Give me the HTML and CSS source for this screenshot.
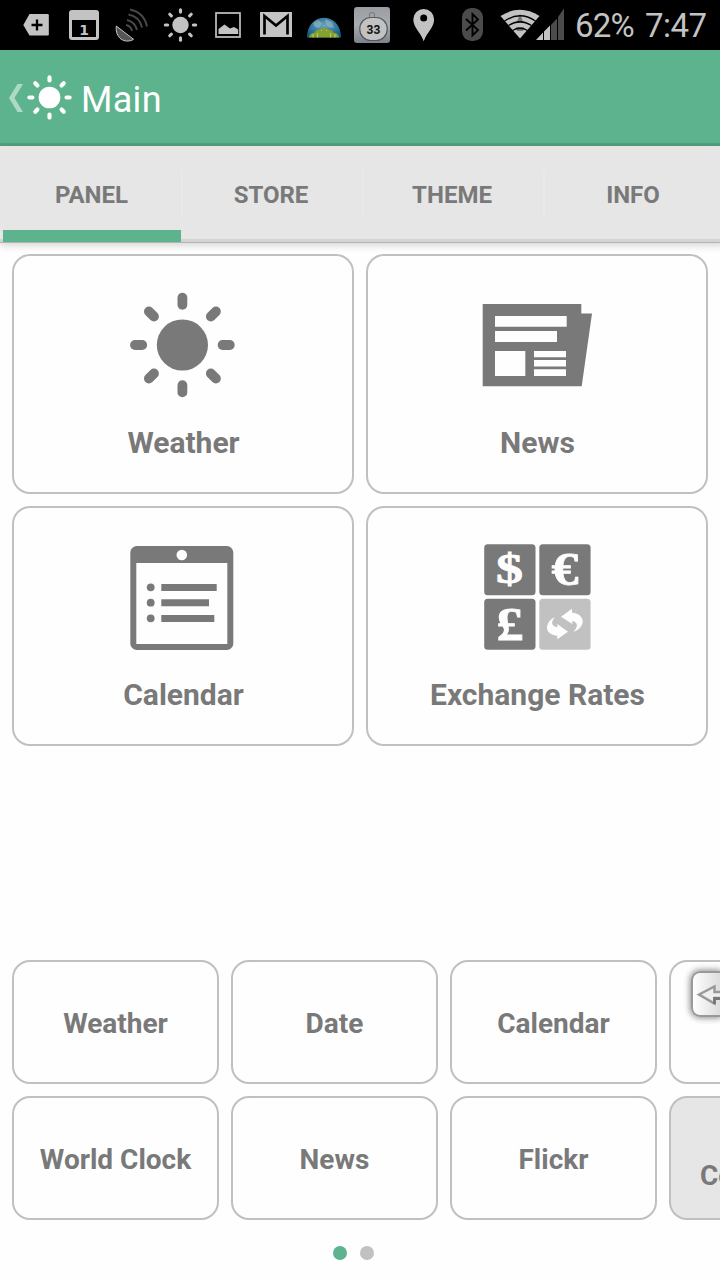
FILE: index.html
```html
<!DOCTYPE html>
<html lang="en">
<head>
    <meta charset="UTF-8">
    <meta name="viewport" content="width=device-width, initial-scale=1.0">
    <title>Main</title>
    <link rel="stylesheet" href="styles.css">
</head>
<body>
    <svg class="defs" width="0" height="0">
        <symbol id="sun" viewBox="-53 -53 106 106">
            <circle r="25.6"/>
            <g id="rays">
                <rect id="ray" x="-4.9" y="-52.3" width="9.8" height="17" rx="4.9"/>
                <use href="#ray" transform="rotate(45)"/>
                <use href="#ray" transform="rotate(90)"/>
                <use href="#ray" transform="rotate(135)"/>
                <use href="#ray" transform="rotate(180)"/>
                <use href="#ray" transform="rotate(225)"/>
                <use href="#ray" transform="rotate(270)"/>
                <use href="#ray" transform="rotate(315)"/>
            </g>
        </symbol>
        <linearGradient id="silver" x1="0" y1="0" x2="0" y2="1">
            <stop offset="0" stop-color="#9a9da1"/>
            <stop offset="0.5" stop-color="#a9acaf"/>
            <stop offset="1" stop-color="#7d838b"/>
        </linearGradient>
        <radialGradient id="globe" cx="0.5" cy="0.4" r="0.6">
            <stop offset="0" stop-color="#6fa3b8"/>
            <stop offset="1" stop-color="#12608f"/>
        </radialGradient>
    </svg>

    <div class="status">
        <svg width="48" height="50"><path fill="#c3c3c3" d="M17.500 14h18q1.300 0 1.300 1.300v18.900q0 1.300-1.300 1.300h-18L11.300 25z"/><path stroke="#000" stroke-width="2.300" d="M25 19.500v11M19.500 25h11"/></svg>
        <svg width="48" height="50"><rect x="9" y="10" width="30" height="30" rx="3" fill="#c3c3c3"/><path d="M12 20h24v17H12z"/><text class="day" x="24" y="34.500">1</text></svg>
        <svg width="48" height="50">
            <path fill="#555" stroke="#c3c3c3" d="M8.300 26L25.500 39.300C22 42 14 42 10.500 36.500 8 32.500 8 29 8.300 26z"/>
            <g fill="none" stroke="#484848" stroke-width="2"><path d="M18 25q5 1 6 6M19 20q8 2 10 10M20.500 14.500q11 2 13.500 13M22 9.500q14 3 17 17"/></g>
        </svg>
        <svg width="48" height="50" fill="#c3c3c3"><use href="#sun" x="7.500" y="8" width="34" height="34"/></svg>
        <svg width="48" height="50"><rect x="12" y="13" width="24" height="24" fill="none" stroke="#c3c3c3" stroke-width="1.700"/><path fill="#c3c3c3" d="M14.500 34v-5l6-4.500 5.500 4 4-1.500 4.200 2.500V34z"/></svg>
        <svg width="48" height="50"><path fill="#c3c3c3" d="M8 12h32v25H8z"/><path fill="none" stroke="#000" stroke-width="2.700" d="M12.500 34.500V16L24 25.500 35.500 16v18.500"/></svg>
        <svg width="48" height="50">
            <path fill="url(#globe)" d="M7 37.500C7 11 41 11 41 37.500z"/>
            <path fill="#a4c4c8" opacity=".5" d="M13 23l5-3 4 3-3 5-4-1zM25 19l7 3 2 6-6-1-2-3z"/>
            <path fill="#86a02c" d="M9 37.500q1-5 5-4.500 2-3.500 4.500-3 5.500-4 11 0 3-.5 4.500 3 4-.5 5 4.500z"/>
            <path stroke="#b7cd68" d="M13 34v3.500M17.500 33v4.500M30.500 33v4.500M35 34v3.500M21 30.500h1M26 30.500h1"/>
        </svg>
        <svg width="48" height="50">
            <rect x="6" y="7" width="36" height="36" rx="3" fill="url(#silver)"/>
            <rect x="21.500" y="12.500" width="5" height="6" rx="2" fill="none" stroke="#70767e"/>
            <rect x="11.800" y="17.500" width="27.400" height="23" rx="11" fill="#c2c2c2" stroke="#54585d" stroke-width="1.200"/>
            <text class="count" x="25.500" y="34">33</text>
        </svg>
        <svg width="48" height="50"><path fill="#c3c3c3" fill-rule="evenodd" d="M27.700 41.300C24.500 32 17.300 28 17.300 19.300a10.400 10.400 0 0 1 20.800 0C38.100 28 31 32 27.700 41.300zM27.700 14.500a3.500 3.500 0 1 0 0 7 3.500 3.500 0 1 0 0-7z"/></svg>
        <svg width="48" height="50"><rect x="18" y="8" width="21" height="33" rx="9.500" fill="#4b4b4b"/><path fill="none" stroke="#000" stroke-width="1.900" d="M22 19l12 11-5.500 5.500V14l5.500 5.500-12 11"/></svg>
        <svg class="wifi" width="40" height="50">
            <path fill="#c3c3c3" d="M20 38.500L.5 16Q20 3.500 39.500 16z"/>
            <path fill="#757575" d="M20 14l3.500 9h-7zM16 27h8l-1 4h-6z"/>
            <path fill="none" stroke="#000" stroke-width="1.300" d="M4.500 21Q20 10.500 35.500 21M8.500 25.500Q20 18 31.500 25.500M12.500 30.500Q20 26 27.500 30.500"/>
        </svg>
        <svg class="signal" width="28" height="50"><path fill="#4b4b4b" d="M15 25l6-6.500V40h-6zM22 17l6-8.500V40h-6z"/><path fill="#c3c3c3" d="M0 40l7-7.500V40zM8 31.500l6-6V40H8z"/></svg>
        <span class="battery">62%</span>
        <span class="clock">7:47</span>
    </div>

    <div class="header">
        <svg class="back" width="14" height="28"><path d="M8.500 0H14L5.500 14 14 28H8.500L0 14z"/></svg>
        <svg class="logo" width="45" height="45"><use href="#sun" width="45" height="45"/></svg>
        <h1>Main</h1>
    </div>

    <div class="tabs">
        <div class="tab active"><span>PANEL</span></div>
        <div class="tab"><span>STORE</span></div>
        <div class="tab"><span>THEME</span></div>
        <div class="tab"><span>INFO</span></div>
    </div>

    <div class="panels">
        <div class="card">
            <svg width="110" height="110"><use href="#sun" x="1.400" y="2" width="106" height="106"/></svg>
            <span>Weather</span>
        </div>
        <div class="card">
            <svg width="110" height="110">
                <path d="M.7 14h98.600v9.500H110L99.700 96.300H.7z"/>
                <path fill="#fefefe" d="M13 26h71.700v10.700H13zM13 41h62v11H13zM13 61h30.300v25H13zM52 61h32v6.300H52zM52 70h32v6.500H52zM52 79.300h32V86H52z"/>
            </svg>
            <span>News</span>
        </div>
        <div class="card">
            <svg width="110" height="110">
                <rect x="2.300" y="4" width="103" height="104" rx="6.500"/>
                <path fill="#fefefe" d="M8.300 21h91v81h-91z"/>
                <circle cx="53.800" cy="13" r="5.300" fill="#fefefe"/>
                <circle cx="22.700" cy="45.300" r="3.900"/>
                <circle cx="22.700" cy="60.700" r="3.900"/>
                <circle cx="22.700" cy="76.300" r="3.900"/>
                <path d="M33.300 42h55.400v7H33.300zM33.300 57.300H81v7H33.300zM33.300 73h53v7h-53z"/>
            </svg>
            <span>Calendar</span>
        </div>
        <div class="card">
            <svg width="110" height="110">
                <rect x="2.200" y="2.200" width="51.300" height="51" rx="3.500"/>
                <rect x="57.300" y="2.200" width="51.300" height="51" rx="3.500"/>
                <rect x="2.200" y="56.800" width="51.300" height="51" rx="3.500"/>
                <rect x="57.300" y="56.800" width="51.300" height="51" rx="3.500" fill="#c1c1c1"/>
                <text class="money dollar" x="27.500" y="40.500" textLength="27" lengthAdjust="spacingAndGlyphs">$</text>
                <text class="money" x="83" y="43" textLength="27" lengthAdjust="spacingAndGlyphs">€</text>
                <text class="money" x="28" y="98" textLength="27" lengthAdjust="spacingAndGlyphs">£</text>
                <path fill="#fefefe" d="M79 74.700L90 66.700v4C97 71 101 75.500 100.700 79.700 100 85 96 88.500 91.300 89.700 96.500 85 96 80 90.300 79v3zM86 89.700l-10.700 7.600v-3.600C69 93.500 64.500 89.500 65 85.300 65.500 80.500 68.500 77 73 75.300 68.500 80 69.500 84.500 75.300 85.300V82z"/>
            </svg>
            <span>Exchange Rates</span>
        </div>
    </div>

    <div class="widgets">
        <div class="widget">Weather</div>
        <div class="widget">Date</div>
        <div class="widget">Calendar</div>
        <div class="widget key">
            <svg width="29" height="46"><path fill="#eee" stroke="#999" stroke-width="2.500" d="M6 21.500L21.500 13.500v5.500H50v6H21.500v5.500z"/><path fill="none" stroke="#777" stroke-width="2.800" d="M21.500 31v-5.500h28"/></svg>
        </div>
        <div class="widget">World Clock</div>
        <div class="widget">News</div>
        <div class="widget">Flickr</div>
        <div class="widget selected">Co</div>
    </div>

    <div class="dots">
        <span class="dot on"></span>
        <span class="dot"></span>
    </div>
</body>
</html>
```
FILE: styles.css
```css
* {
    box-sizing: border-box;
}
body {
    margin: 0;
    width: 720px;
    height: 1280px;
    overflow: hidden;
    display: flex;
    flex-direction: column;
    background: #fefefe;
    color: #797979;
    font-family: Roboto, "Liberation Sans", sans-serif;
}
svg {
    display: block;
    flex: none;
}
.defs {
    position: absolute;
}

/* status bar */
.status {
    height: 50px;
    flex: none;
    display: flex;
    padding-left: 12px;
    background: #000;
    color: #c3c3c3;
    font-size: 33px;
    line-height: 52px;
}
.status .day {
    font: bold 14px "DejaVu Sans", sans-serif;
    text-anchor: middle;
    fill: #c3c3c3;
}
.status .count {
    font: bold 12px Roboto, sans-serif;
    text-anchor: middle;
    fill: #111;
}
.wifi {
    margin-left: 8px;
}
.signal {
    margin-left: -4px;
}
.battery {
    width: 58px;
    margin-left: 11px;
    letter-spacing: -0.8px;
}
.clock {
    margin-left: 12px;
    letter-spacing: -0.5px;
}

/* action bar */
.header {
    height: 96px;
    flex: none;
    display: flex;
    align-items: center;
    padding-left: 9px;
    background: #5cb38d;
    border-bottom: 3px solid #53a17f;
    color: #fff;
    fill: #fff;
}
.header .back {
    opacity: 0.5;
    margin-top: 3px;
}
.header .logo {
    margin: 2px 0 0 4px;
}
.header h1 {
    margin: 6px 0 0 9px;
    font-size: 36px;
    font-weight: normal;
    letter-spacing: 0.3px;
}

/* tabs */
.tabs {
    height: 97px;
    flex: none;
    display: grid;
    grid-template-columns: 180px 181px 181px 181px;
    margin-right: -5px;
    padding-left: 3px;
    background: linear-gradient(#e6e6e6 93px, #d4d4d4 93px, #d4d4d4 96px, #b4b4b4 96px);
    box-shadow: 0 2px 8px rgba(0, 0, 0, 0.18);
}
.tab {
    display: flex;
    align-items: center;
    justify-content: center;
    height: 96px;
    font-size: 24px;
    font-weight: bold;
    background: linear-gradient(#e9e9e9, #e9e9e9) right 24px / 2px 48px no-repeat;
}
.tab:last-child {
    background: none;
}
.tab span {
    padding: 2px 5px 0 0;
}
.tab.active span {
    padding-right: 3px;
}
.tab.active {
    background: linear-gradient(#5cb38d, #5cb38d) 0 84px / 178px 12px no-repeat,
        linear-gradient(#e9e9e9, #e9e9e9) right 24px / 2px 48px no-repeat;
}

/* panel cards */
.panels {
    display: grid;
    grid-template-columns: 342px 342px;
    grid-auto-rows: 240px;
    gap: 12px;
    padding: 11px 12px 0;
}
.card {
    display: flex;
    flex-direction: column;
    align-items: center;
    padding-top: 34px;
    border: 2px solid #c0c0c0;
    border-radius: 18px;
    fill: #797979;
    font-size: 30px;
    line-height: 36px;
    font-weight: bold;
}
.card span {
    margin-top: 25px;
    padding-left: 1px;
}
.money {
    font: bold 47px "Liberation Serif", serif;
    text-anchor: middle;
    fill: #fefefe;
    stroke: #fefefe;
    stroke-width: 0.8px;
}
.money.dollar {
    font-size: 42px;
}

/* widget strip */
.widgets {
    display: grid;
    grid-template-columns: 207px 207px 207px 51px;
    grid-auto-rows: 124px;
    gap: 12px;
    margin-top: auto;
    padding-left: 12px;
}
.widget {
    display: flex;
    align-items: center;
    justify-content: center;
    padding-top: 2px;
    border: 2px solid #c0c0c0;
    border-radius: 18px;
    font-size: 28px;
    font-weight: bold;
}
/* last column is cut by the screen edge */
.widget:nth-child(4n) {
    justify-content: flex-start;
    overflow: hidden;
    border-right: none;
    border-radius: 18px 0 0 18px;
}
.widget.key {
    align-items: flex-start;
    padding: 9px 0 0 20px;
}
.key svg {
    border: 2px solid #999;
    border-right: none;
    border-radius: 9px 0 0 9px;
    background: linear-gradient(90deg, #fefefe, #ddd);
    box-shadow: 0 0 6px 1px #8a8a8a;
}
.widget.selected {
    padding: 34px 0 0 29px;
    background: #e6e6e6;
}

.dots {
    display: flex;
    gap: 13px;
    height: 60px;
    padding: 26px 0 0 333px;
}
.dot {
    width: 14px;
    height: 14px;
    border-radius: 50%;
    background: #c1c1c1;
}
.dot.on {
    background: #5cb38d;
}
```
